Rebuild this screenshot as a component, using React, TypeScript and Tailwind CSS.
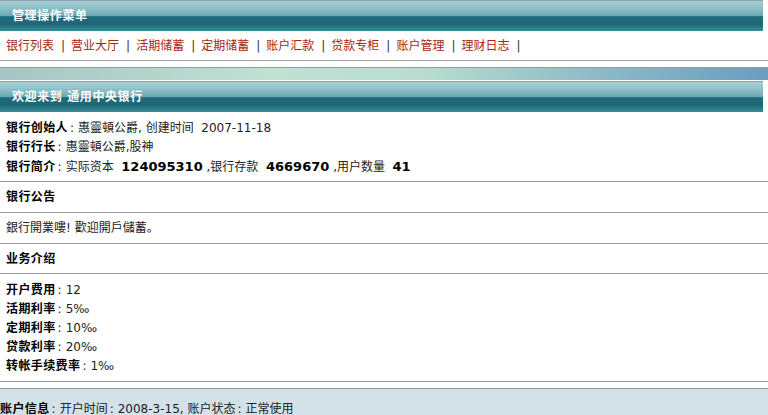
import type { ReactNode } from "react";

const MENU = ["银行列表", "营业大厅", "活期储蓄", "定期储蓄", "账户汇款", "贷款专柜", "账户管理", "理财日志"];

const RATES: [string, string][] = [
  ["开户费用", "12"],
  ["活期利率", "5‰"],
  ["定期利率", "10‰"],
  ["贷款利率", "20‰"],
  ["转帐手续费率", "1‰"],
];

function TitleBar({ children }: { children: ReactNode }) {
  return (
    <div className="flex h-[31px] w-[763px] items-center border-t border-[#8aa2a8] bg-[linear-gradient(to_bottom,#a6d0d6_0%,#86bcc5_30%,#6aa6b1_50%,#1f6c7c_52%,#1c6878_78%,#3a8c98_100%)] pl-3">
      <span className="text-[12px] font-bold tracking-[0.6px] text-white">{children}</span>
    </div>
  );
}

function Label({ children }: { children: ReactNode }) {
  return <b className="font-bold tracking-[0.4px] text-black">{children}</b>;
}

// the old page puts a little air either side of every colon
function Colon() {
  return <span className="ml-[2px] mr-[4px]">:</span>;
}

function Num({ children }: { children: ReactNode }) {
  return <b className="font-['DejaVu_Sans',sans-serif] text-[13px] font-bold text-black">{children}</b>;
}

export default function App() {
  return (
    <div className="min-h-[415px] w-[768px] overflow-hidden bg-white font-['DejaVu_Sans','Noto_Sans_CJK_SC',sans-serif] text-[12px] text-[#222]">
      <TitleBar>管理操作菜单</TitleBar>

      {/* menu links */}
      <div className="flex h-[30px] items-center border-b border-[#a0a0a0] pl-[6px]">
        {MENU.map((item) => (
          <span key={item} className="flex items-center">
            <span className="text-[#a8260f]">{item}</span>
            <span className="ml-[7px] mr-[6px] text-[#333]">|</span>
          </span>
        ))}
      </div>

      <div className="mt-[6px] h-[13px] border-t border-[#8e9e9e] bg-[linear-gradient(to_right,#a7c4c4_0%,#bfe2d3_35%,#b9ddcf_55%,#8fb9c6_78%,#6b9dc0_100%)]" />
      <div className="h-px bg-white" />

      <TitleBar>欢迎来到 通用中央银行</TitleBar>

      {/* bank info */}
      <div className="border-b border-[#999] pb-[4px] pl-[6px] pt-[7px] leading-[19px]">
        <div>
          <Label>银行创始人</Label>
          <Colon />
          惠靈頓公爵, 创建时间&nbsp; 2007-11-18
        </div>
        <div>
          <Label>银行行长</Label>
          <Colon />
          惠靈頓公爵,股神
        </div>
        <div>
          <Label>银行简介</Label>
          <Colon />
          实际资本&nbsp; <Num>124095310</Num> ,银行存款&nbsp; <Num>4669670</Num> ,用户数量&nbsp; <Num>41</Num>
        </div>
      </div>

      <div className="flex h-[31px] items-center border-b border-[#999] pl-[6px]">
        <Label>银行公告</Label>
      </div>
      <div className="flex h-[31px] items-center border-b border-[#999] pl-[6px]">銀行開業嘍! 歡迎開戶儲蓄。</div>
      <div className="flex h-[30px] items-center border-b border-[#999] pl-[6px]">
        <Label>业务介绍</Label>
      </div>

      {/* rates */}
      <div className="border-b border-[#999] pb-[5px] pl-[6px] pt-[7px] leading-[19px]">
        {RATES.map(([k, v]) => (
          <div key={k}>
            <Label>{k}</Label>
            <Colon />
            {v}
          </div>
        ))}
      </div>

      <div className="mt-[6px] flex h-[28px] items-center border-t border-[#999] bg-[#d3e1e8] pt-[12px]">
        <span>
          <Label>账户信息</Label>
          <Colon />
          开户时间
          <Colon />
          2008-3-15, 账户状态
          <Colon />
          正常使用
        </span>
      </div>
    </div>
  );
}
